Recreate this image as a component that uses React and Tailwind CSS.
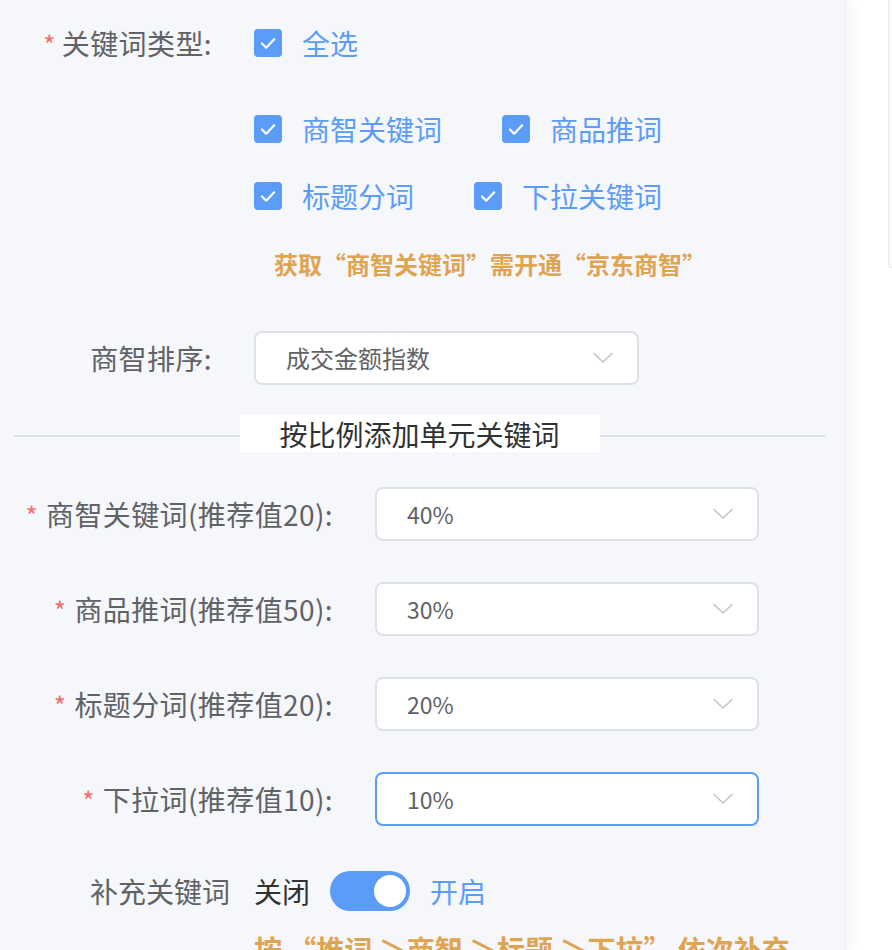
import React from "react";

const font = { fontFamily: '"Noto Sans CJK SC", "Noto Sans", sans-serif' };

const Check = ({ label }) => (
  <div className="flex items-center h-[54px] mr-[60px]">
    <span className="w-[28px] h-[28px] rounded-[4px] bg-[#5b9cf8] flex items-center justify-center">
      <svg width="28" height="28" viewBox="0 0 28 28" fill="none">
        <path d="M8 14.5l4.2 4.2 8-8.4" stroke="#fff" strokeWidth="2.2" strokeLinecap="round" strokeLinejoin="round" />
      </svg>
    </span>
    <span className="ml-[20px] text-[28px] text-[#5b9cf8] leading-none">{label}</span>
  </div>
);

const Chevron = () => (
  <svg width="20" height="12" viewBox="0 0 20 12" fill="none">
    <path d="M1 1.5l9 8.5 9-8.5" stroke="#c0c4cc" strokeWidth="1.6" strokeLinecap="round" strokeLinejoin="round" />
  </svg>
);

const Select = ({ value, focused }) => (
  <div
    className={`w-[384px] h-[54px] rounded-[8px] bg-white border-2 flex items-center justify-between pl-[30px] pr-[24px] ${
      focused ? "border-[#5b9cf8]" : "border-[#dfe1e8]"
    }`}
  >
    <span className="text-[23px] text-[#606266]">{value}</span>
    <Chevron />
  </div>
);

const ratios = [
  { label: "商智关键词(推荐值20)", value: "40%" },
  { label: "商品推词(推荐值50)", value: "30%" },
  { label: "标题分词(推荐值20)", value: "20%" },
  { label: "下拉词(推荐值10)", value: "10%", focused: true },
];

export default function App() {
  return (
    <div className="flex w-[892px] h-[950px] overflow-hidden bg-white" style={font}>
      <div className="w-[846px] shrink-0 bg-[#f5f7fb] pt-[16px] border-r border-[#eceef3] shadow-[6px_0_14px_rgba(0,0,0,0.04)]">
        {/* keyword type */}
        <div className="flex items-center h-[54px]">
          <div className="w-[254px] pr-[42px] text-right text-[28px] text-[#606266] tracking-[0.4px]">
            <span className="text-[#f56c6c] mr-[6px] text-[26px]">*</span>关键词类型:
          </div>
          <Check label="全选" />
        </div>

        <div className="ml-[254px] mt-[32px] flex flex-wrap gap-y-[13px] w-[500px]">
          <Check label="商智关键词" />
          <Check label="商品推词" />
          <Check label="标题分词" />
          <Check label="下拉关键词" />
        </div>

        <div className="mt-[21px] h-[40px] flex items-center pl-[274px] text-[24px] font-bold text-[#e0a451]">
          获取“商智关键词”需开通“京东商智”
        </div>

        <div className="mt-[47px] flex items-center">
          <div className="w-[254px] pr-[42px] text-right text-[28px] text-[#606266] tracking-[0.4px]">商智排序:</div>
          <div className="w-[385px] h-[54px] rounded-[8px] bg-white border-2 border-[#dfe1e8] flex items-center justify-between pl-[30px] pr-[24px]">
            <span className="text-[24px] text-[#606266]">成交金额指数</span>
            <Chevron />
          </div>
        </div>

        {/* divider */}
        <div className="mt-[30px] mx-[14px] w-[811px] flex items-center">
          <div className="flex-1 h-[2px] bg-[#dcdfe6] mt-[4px]" />
          <div className="w-[360px] h-[37px] bg-white flex items-center justify-center text-[28px] text-[#303133]">
            按比例添加单元关键词
          </div>
          <div className="flex-1 h-[2px] bg-[#dcdfe6] mt-[4px]" />
        </div>

        <div className="mt-[35px] flex flex-col gap-[41px]">
          {ratios.map((r) => (
            <div key={r.label} className="flex items-center h-[54px]">
              <div className="w-[375px] pr-[42px] text-right text-[28px] text-[#606266] whitespace-nowrap tracking-[0.4px]">
                <span className="text-[#f56c6c] mr-[8px] text-[26px]">*</span>
                {r.label}:
              </div>
              <Select value={r.value} focused={r.focused} />
            </div>
          ))}
        </div>

        <div className="mt-[38px] h-[54px] flex items-center">
          <div className="w-[254px] pr-[24px] text-right text-[28px] text-[#606266]">补充关键词</div>
          <span className="text-[28px] text-[#303133]">关闭</span>
          <span className="ml-[20px] w-[80px] h-[40px] rounded-full bg-[#5b9cf8] flex items-center justify-end pr-[4px]">
            <span className="w-[32px] h-[32px] rounded-full bg-white" />
          </span>
          <span className="ml-[20px] text-[28px] text-[#5b9cf8]">开启</span>
        </div>

        <div className="mt-[9px] pl-[254px] h-[44px] flex items-center text-[28px] font-bold text-[#e0a451] whitespace-nowrap">
          按 “推词 ＞商智 ＞标题 ＞下拉” 依次补充
        </div>
      </div>
      <div className="flex-1 flex justify-end">
        <div className="w-[4px] h-[268px] border-l border-b border-[#e8eaf0] rounded-bl-[4px] bg-[#f8f9fb]" />
      </div>
    </div>
  );
}
